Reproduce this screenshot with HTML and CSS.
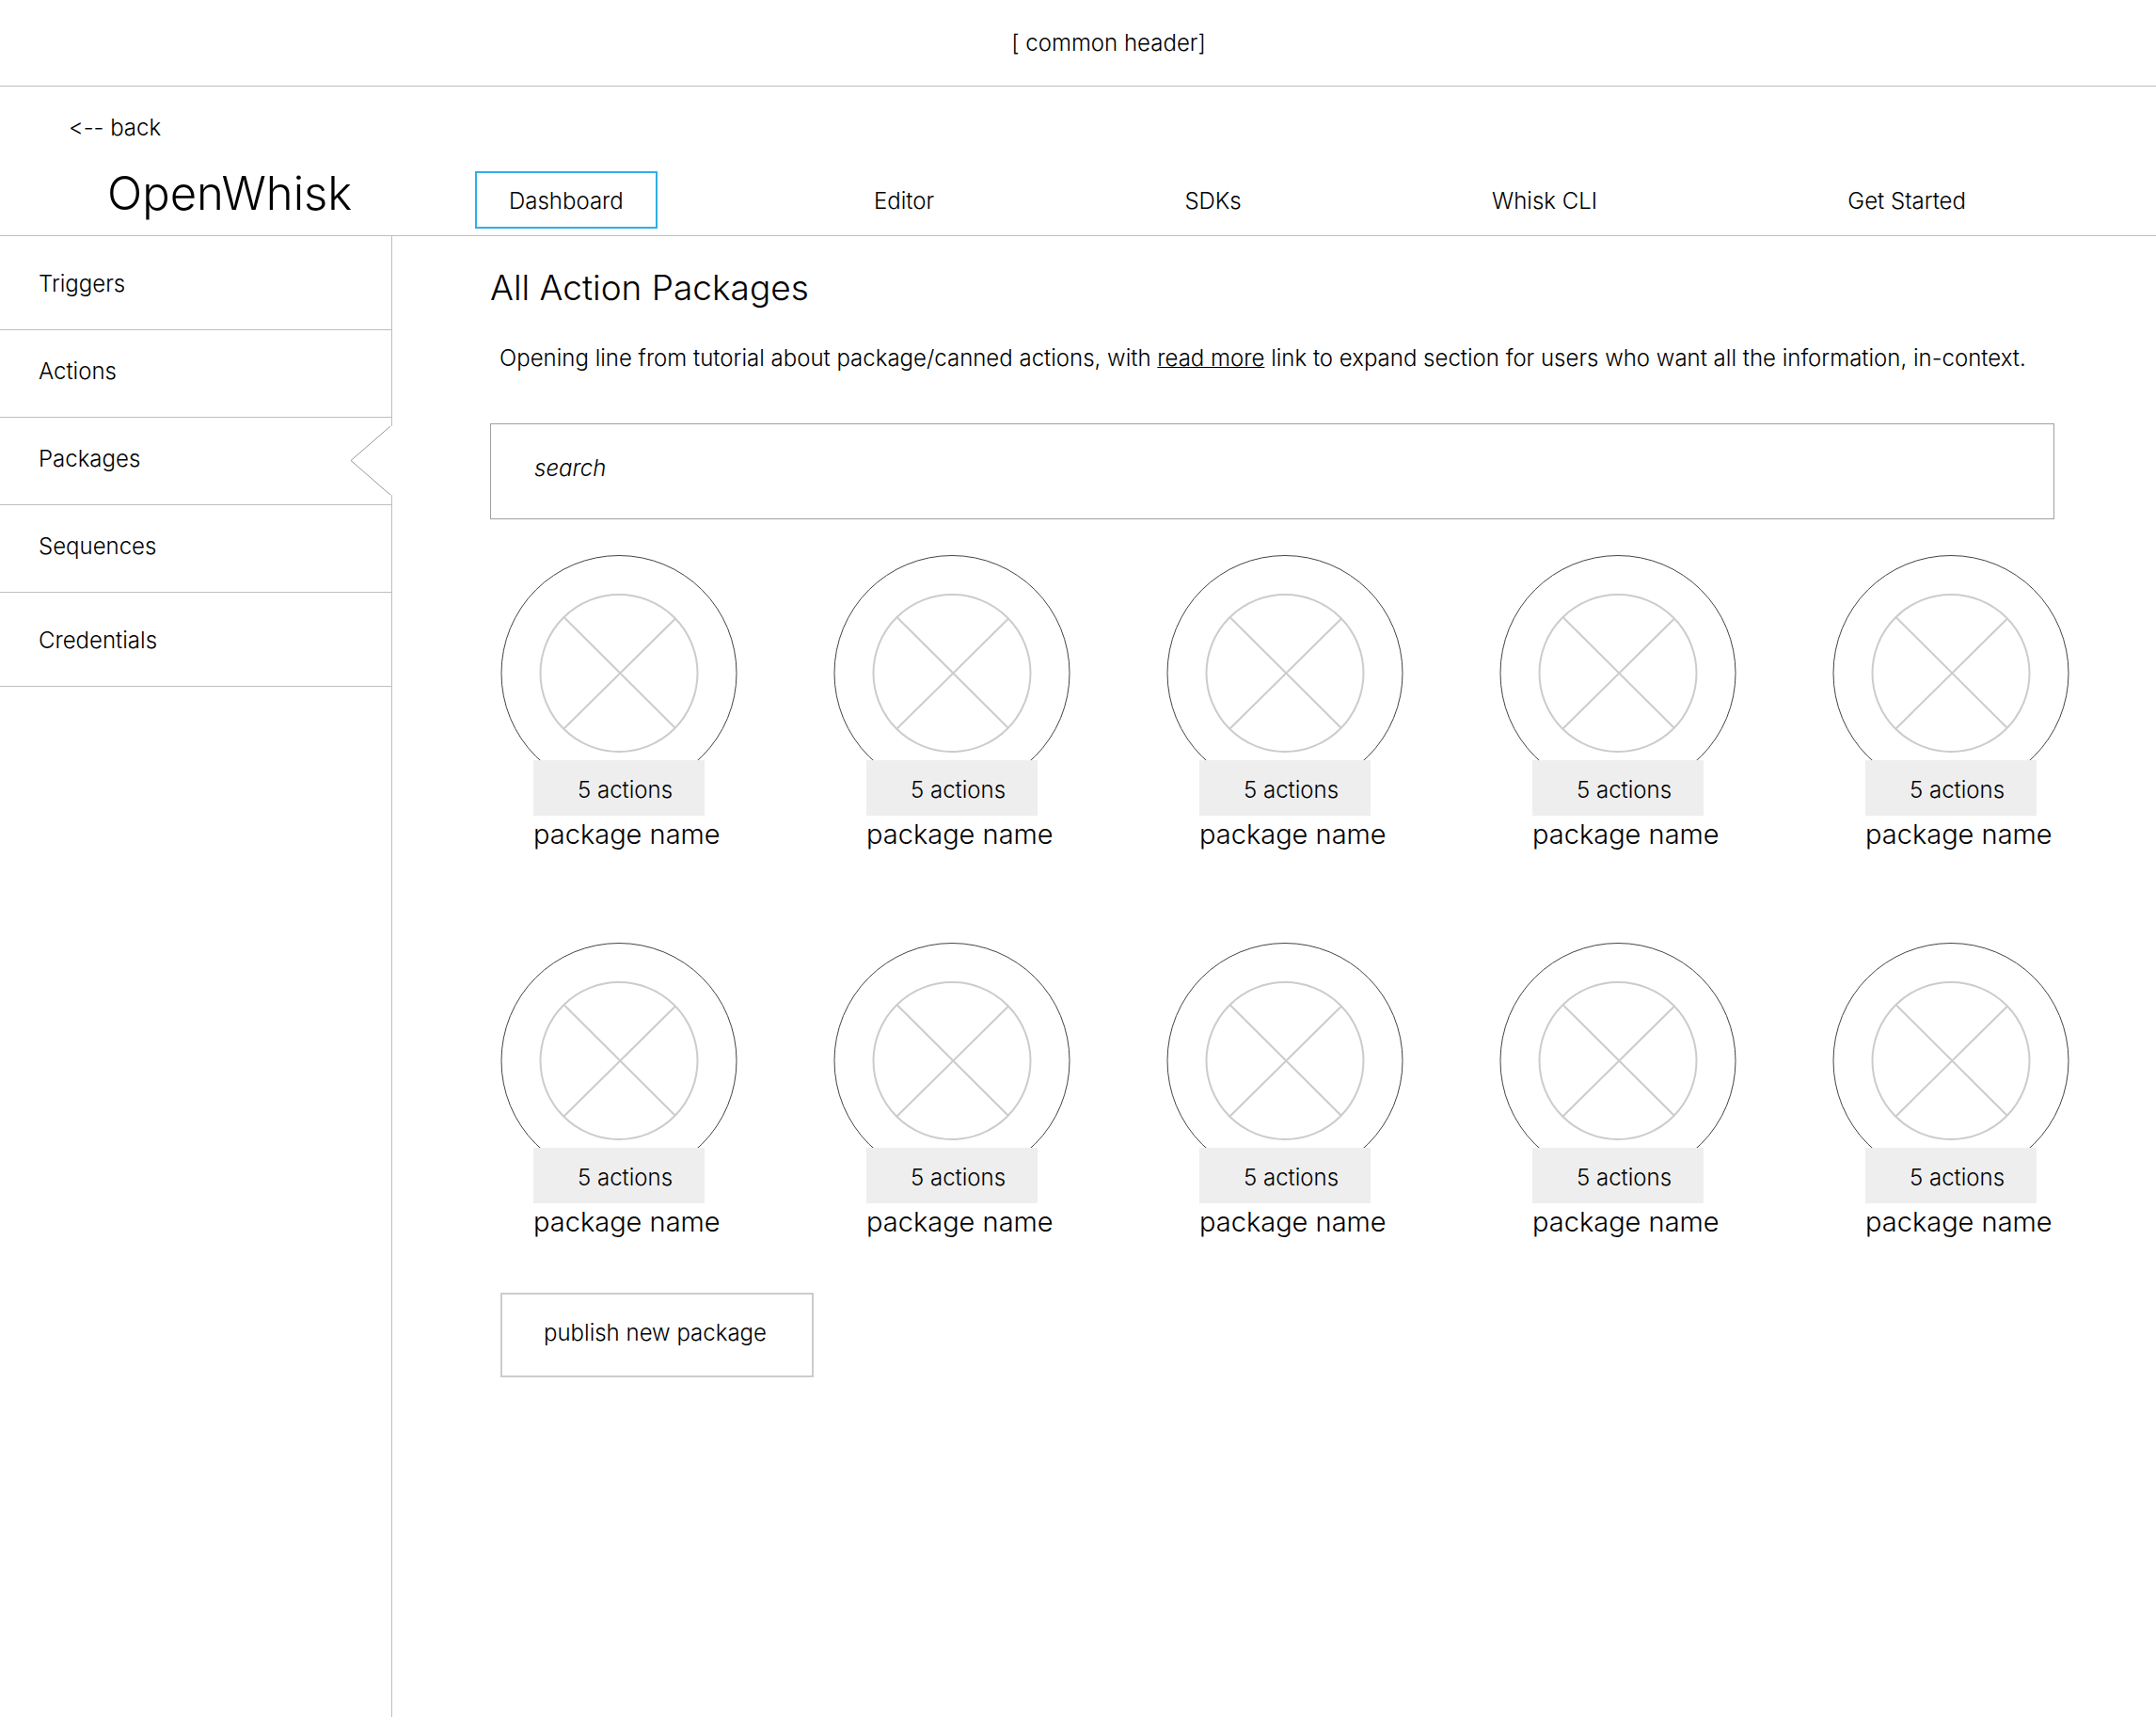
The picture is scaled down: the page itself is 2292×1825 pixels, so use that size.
FILE: index.html
```html
<!DOCTYPE html>
<html lang="en">
<head>
<meta charset="utf-8">
<meta name="viewport" content="width=device-width, initial-scale=1">
<title>OpenWhisk - All Action Packages</title>
<link rel="stylesheet" href="styles.css">
</head>
<body>
<svg class="defs" aria-hidden="true">
  <symbol id="package" viewBox="0 0 252 218">
    <circle class="ring" cx="126" cy="125.500" r="125"/>
    <g class="placeholder">
      <circle cx="126" cy="125.500" r="83.500"/>
      <path d="M68 66.500 186 184M186 67.500 67 185"/>
    </g>
  </symbol>
</svg>

<header class="common-header">[ common header]</header>

<div class="product-bar">
  <a class="back" href="#">&lt;-- back</a>
  <div class="product-row">
    <div class="product-name">OpenWhisk</div>
    <nav class="tabs" aria-label="Product">
      <a class="tab tab-active" href="#" aria-current="page">Dashboard</a>
      <a class="tab" href="#">Editor</a>
      <a class="tab" href="#">SDKs</a>
      <a class="tab" href="#">Whisk CLI</a>
      <a class="tab" href="#">Get Started</a>
    </nav>
  </div>
</div>

<div class="body">
  <nav class="sidebar" aria-label="Sections">
    <a class="side-link side-link-tall" href="#">Triggers</a>
    <a class="side-link" href="#">Actions</a>
    <a class="side-link" href="#" aria-current="page">Packages
      <svg class="notch" width="45" height="73" viewBox="0 0 45 73" aria-hidden="true"><path d="M43 0 1 36.500 43 73"/></svg>
    </a>
    <a class="side-link" href="#">Sequences</a>
    <a class="side-link side-link-tall" href="#">Credentials</a>
  </nav>

  <main class="content">
    <h1 class="title">All Action Packages</h1>
    <p class="intro">Opening line from tutorial about package/canned actions, with <a href="#">read more</a> link to expand section for users who want all the information, in-context.</p>
    <input class="search" type="search" placeholder="search" aria-label="Search packages">

    <div class="packages">
      <article class="card"><svg class="emblem"><use href="#package"/></svg><div class="count">5 actions</div><h2 class="name">package name</h2></article>
      <article class="card"><svg class="emblem"><use href="#package"/></svg><div class="count">5 actions</div><h2 class="name">package name</h2></article>
      <article class="card"><svg class="emblem"><use href="#package"/></svg><div class="count">5 actions</div><h2 class="name">package name</h2></article>
      <article class="card"><svg class="emblem"><use href="#package"/></svg><div class="count">5 actions</div><h2 class="name">package name</h2></article>
      <article class="card"><svg class="emblem"><use href="#package"/></svg><div class="count">5 actions</div><h2 class="name">package name</h2></article>
      <article class="card"><svg class="emblem"><use href="#package"/></svg><div class="count">5 actions</div><h2 class="name">package name</h2></article>
      <article class="card"><svg class="emblem"><use href="#package"/></svg><div class="count">5 actions</div><h2 class="name">package name</h2></article>
      <article class="card"><svg class="emblem"><use href="#package"/></svg><div class="count">5 actions</div><h2 class="name">package name</h2></article>
      <article class="card"><svg class="emblem"><use href="#package"/></svg><div class="count">5 actions</div><h2 class="name">package name</h2></article>
      <article class="card"><svg class="emblem"><use href="#package"/></svg><div class="count">5 actions</div><h2 class="name">package name</h2></article>
    </div>

    <button class="publish" type="button">publish new package</button>
  </main>
</div>
</body>
</html>
```

FILE: styles.css
```css
* {
  box-sizing: border-box;
}

body {
  display: flex;
  flex-direction: column;
  min-height: 100vh;
  margin: 0;
  background: #fff;
  color: #000;
  font: 300 24px/30px Inter, "Liberation Sans", sans-serif;
  font-variant-ligatures: none;
}

a {
  color: inherit;
  text-decoration: none;
}

.defs {
  position: absolute;
  width: 0;
  height: 0;
}

/* Header */
.common-header {
  padding: 31px 0 30px 65px;
  border-bottom: 1px solid #bebebe;
  text-align: center;
}

.product-bar {
  display: flex;
  flex-direction: column;
  align-items: stretch;
  gap: 31px;
  padding: 29px 0 7px;
  border-bottom: 1px solid #bebebe;
}

.back {
  align-self: flex-start;
  margin-left: 73px;
}

.product-row {
  display: flex;
  align-items: flex-start;
}

.product-name {
  flex: 0 0 505px;
  padding-left: 114px;
  font-size: 49px;
  line-height: 48px;
}

.tabs {
  display: flex;
  flex: 1;
  justify-content: space-between;
  margin-right: 202px;
}

.tab {
  padding: 17px 0 14px;
}

.tab-active {
  margin-right: -36px;
  padding: 15px 34px 12px;
  border: 2px solid #2fb0e8;
}

/* Sidebar */
.body {
  display: flex;
  flex: 1;
}

.sidebar {
  flex: 0 0 417px;
  border-right: 1px solid #bebebe;
}

.side-link {
  display: block;
  position: relative;
  padding: 29px 41px 33px;
  border-bottom: 1px solid #bebebe;
}

.side-link-tall {
  padding-block: 36px 33px;
}

.notch {
  position: absolute;
  top: 9px;
  right: -1px;
  fill: #fff;
  stroke: #999;
  background: linear-gradient(#fff, #fff) right / 2px 100% no-repeat;
}

/* Content */
.content {
  flex: 1;
  padding: 33px 92px 60px 104px;
}

.title {
  margin: 0;
  font-size: 37px;
  font-weight: 300;
  line-height: 44px;
}

.intro {
  margin: 38px 0 54px;
  padding-left: 10px;
}

.intro a {
  text-decoration: underline;
  text-decoration-thickness: 1px;
}

.search {
  display: block;
  width: calc(100% - 16px);
  padding: 32px 46px 38px;
  border: 1px solid #a0a0a0;
  border-radius: 0;
  background: #fff;
  color: #000;
  font: inherit;
  appearance: none;
}

.search::placeholder {
  color: #000;
  font-style: italic;
  opacity: 1;
}

.packages {
  display: grid;
  grid-template-columns: repeat(5, 252px);
  justify-content: space-between;
  row-gap: 95px;
  margin: 38px 0 55px 11px;
}

.card {
  display: flex;
  flex-direction: column;
}

.emblem {
  width: 252px;
  height: 218px;
  fill: none;
}

.ring {
  stroke: #444;
  stroke-width: 1;
}

.placeholder {
  stroke: #ccc;
  stroke-width: 2;
}

.count {
  margin: 0 35px;
  padding: 17px 0 12px 47px;
  background: #eee;
}

.name {
  margin: 0 0 0 35px;
  font-size: 29px;
  font-weight: 300;
  line-height: 40px;
  white-space: nowrap;
}

.publish {
  display: block;
  margin-left: 11px;
  padding: 26px 48px 30px 44px;
  border: 2px solid #ccc;
  background: #fff;
  color: #000;
  font: inherit;
}
```
